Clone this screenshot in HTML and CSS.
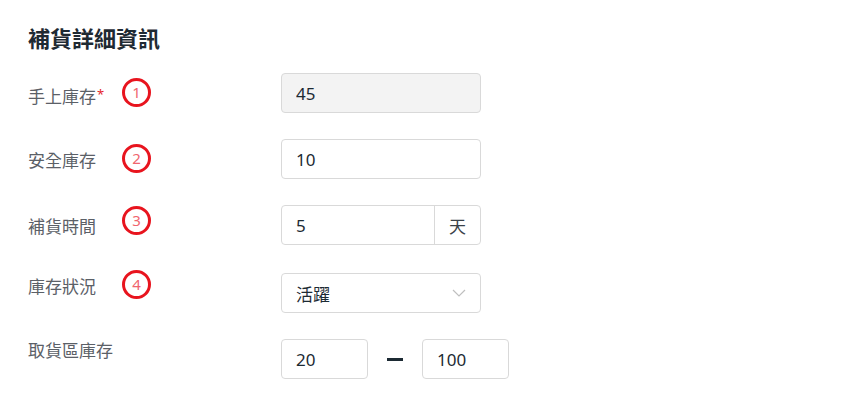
FILE: index.html
```html
<!DOCTYPE html>
<html lang="zh-Hant">
<head>
  <meta charset="UTF-8">
  <meta name="viewport" content="width=device-width, initial-scale=1.0">
  <title>補貨詳細資訊</title>
  <link rel="stylesheet" href="styles.css">
</head>
<body>
  <main class="stock">
    <h2 class="stock__title">補貨詳細資訊</h2>
    <form class="stock__form" action="">
      <div class="row">
        <div class="row__label row__label--a">
          <label class="row__text" for="onhand">手上庫存<span class="req">*</span></label>
          <span class="mark">1</span>
        </div>
        <input class="field field--disabled" type="text" id="onhand" value="45" disabled>
      </div>

      <div class="row">
        <div class="row__label row__label--a">
          <label class="row__text" for="safety">安全庫存</label>
          <span class="mark">2</span>
        </div>
        <input class="field" type="text" id="safety" value="10">
      </div>

      <div class="row">
        <div class="row__label row__label--b">
          <label class="row__text" for="lead">補貨時間</label>
          <span class="mark mark--up">3</span>
        </div>
        <div class="group">
          <input class="group__input" type="text" id="lead" value="5">
          <span class="group__addon">天</span>
        </div>
      </div>

      <div class="row">
        <div class="row__label row__label--c">
          <label class="row__text" for="status">庫存狀況</label>
          <span class="mark">4</span>
        </div>
        <div class="select" id="status">
          <span>活躍</span>
          <svg class="select__arrow" width="14" height="8" viewBox="0 0 14 8" fill="none">
            <path d="M1 1l6 6 6-6" stroke="#bfbfbf" stroke-width="1.2"/>
          </svg>
        </div>
      </div>

      <div class="row">
        <div class="row__label row__label--d">
          <label class="row__text" for="pickmin">取貨區庫存</label>
        </div>
        <div class="range">
          <input class="field field--small" type="text" id="pickmin" value="20">
          <span class="range__dash"></span>
          <input class="field field--small" type="text" value="100">
        </div>
      </div>
    </form>
  </main>
</body>
</html>
```

FILE: styles.css
```css
*,
*::before,
*::after {
  box-sizing: border-box;
}
body{
  margin: 0;
  padding: 0;
  background: #fff;
  font-family: 'Noto Sans', 'Noto Sans CJK TC', sans-serif;
  font-size: 17px;
  color: #1c2a33;
}
.stock{
  padding: 23px 28px;
}
.stock__title{
  margin: 0 0 20px;
  font-size: 22px;
  line-height: 30px;
  font-weight: 700;
  color: #1f2a33;
}
.stock__form{
  display: flex;
  flex-direction: column;
  gap: 26px;
}
.row{
  display: flex;
  align-items: flex-start;
}
.row__label{
  width: 253px;
  display: flex;
  align-items: center;
}
.row__label--a{
  padding-top: 5px;
}
.row__label--b{
  padding-top: 1px;
}
.row__label--c{
  margin-top: -3px;
}
.row__label--d{
  padding-top: 0;
  line-height: 24px;
}
.row__text{
  width: 94px;
  flex-shrink: 0;
  color: #5b6067;
  line-height: 24px;
}
.req{
  color: #e5252a;
  font-size: 13px;
  vertical-align: 4px;
  margin-left: 1px;
}
.mark{
  width: 29px;
  height: 29px;
  flex-shrink: 0;
  margin-bottom: 5px;
  border: 3px solid #e8141e;
  border-radius: 50%;
  display: flex;
  align-items: center;
  justify-content: center;
  color: #f0656e;
  font-size: 15px;
  line-height: 1;
}
.mark--up{
  margin-bottom: 12px;
}
.field{
  width: 200px;
  height: 40px;
  padding: 0 14px;
  border: 1px solid #d9d9d9;
  border-radius: 4px;
  font: inherit;
  color: #1c2a33;
  background: #fff;
  outline: none;
}
.field--disabled{
  background: #f3f3f3;
}
.field--small{
  width: 87px;
}
.group{
  display: flex;
  width: 200px;
  height: 40px;
  border: 1px solid #d9d9d9;
  border-radius: 4px;
}
.group__input{
  flex: 1;
  min-width: 0;
  border: none;
  padding: 0 14px;
  font: inherit;
  color: #1c2a33;
  background: transparent;
  outline: none;
}
.group__addon{
  width: 46px;
  border-left: 1px solid #d9d9d9;
  display: flex;
  align-items: center;
  justify-content: center;
  color: #3a4249;
}
.select{
  width: 200px;
  height: 40px;
  padding: 0 14px;
  border: 1px solid #d9d9d9;
  border-radius: 4px;
  display: flex;
  align-items: center;
  justify-content: space-between;
}
.range{
  display: flex;
  align-items: center;
  gap: 19px;
}
.range__dash{
  width: 16px;
  height: 3px;
  background: #1c2a33;
}
```
